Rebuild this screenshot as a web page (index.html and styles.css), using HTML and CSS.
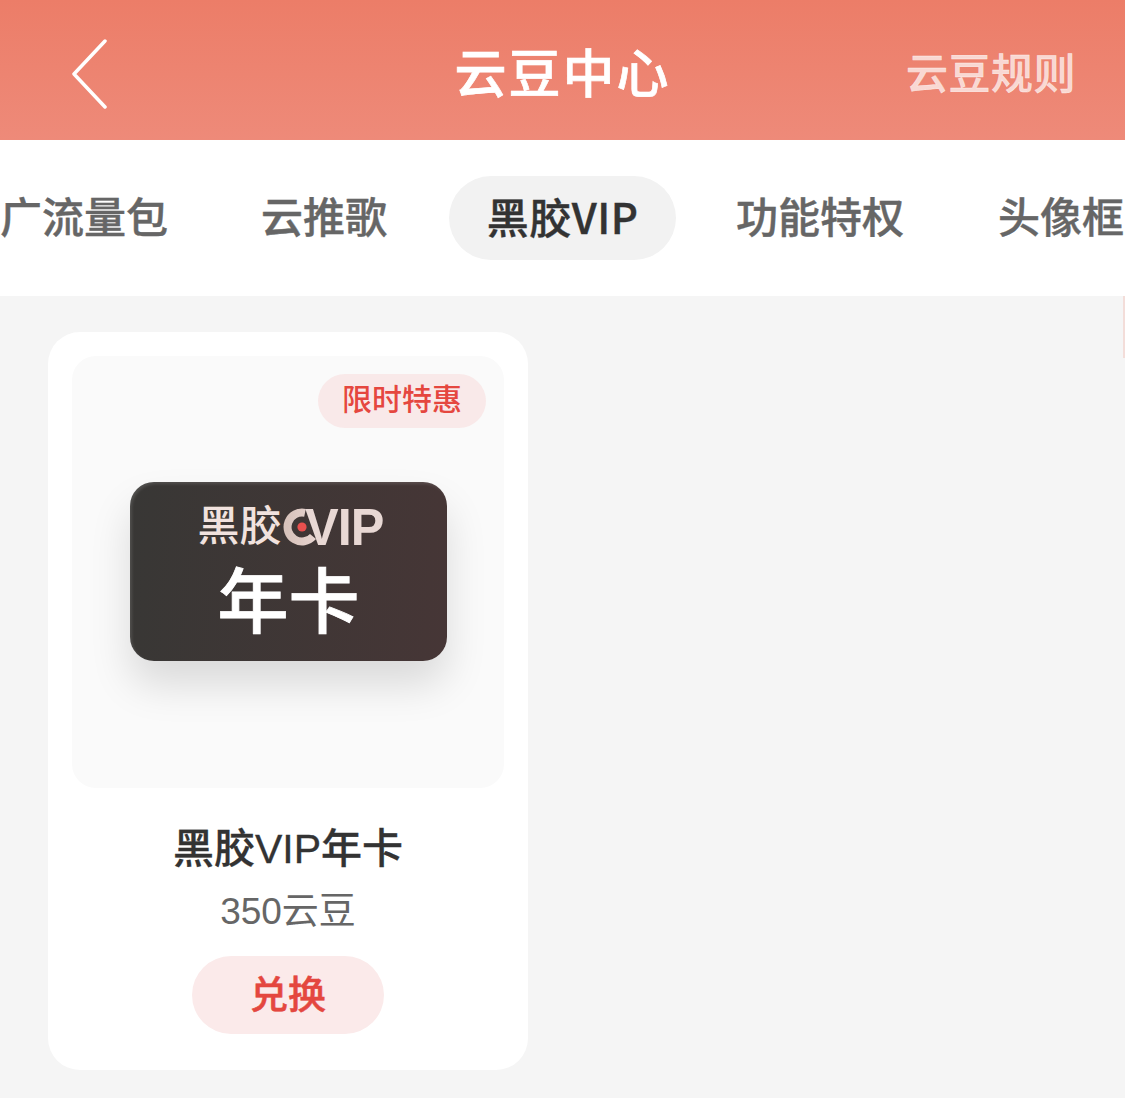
FILE: index.html
```html
<!DOCTYPE html>
<html lang="zh-CN">
<head>
    <meta charset="UTF-8">
    <meta name="viewport" content="width=device-width, initial-scale=1.0">
    <title>云豆中心</title>
    <link rel="stylesheet" href="styles.css">
</head>
<body>
    <header class="topbar">
        <svg class="back" width="36" height="70" viewBox="0 0 36 70">
            <path d="M33 2 L2 35 L33 68" fill="none" stroke="#fff" stroke-width="3.5" stroke-linecap="round" stroke-linejoin="round"/>
        </svg>
        <h1 class="title">云豆中心</h1>
        <a class="rules">云豆规则</a>
    </header>

    <nav class="tabs">
        <span class="tab tab-first">广流量包</span>
        <span class="tab tab-song">云推歌</span>
        <span class="tab active">黑胶VIP</span>
        <span class="tab tab-power">功能特权</span>
        <span class="tab tab-frame">头像框</span>
    </nav>

    <main class="goods">
        <div class="card">
            <div class="thumb">
                <span class="badge">限时特惠</span>
                <div class="vip-card">
                    <div class="vip-logo">
                        <span class="vip-word">黑胶</span>
                        <svg class="vip-mark" width="40" height="38" viewBox="0 0 40 38">
                            <defs>
                                <linearGradient id="ring" x1="0" y1="0" x2="1" y2="0">
                                    <stop offset="0" stop-color="#d8c3bc"/>
                                    <stop offset="1" stop-color="#e6d3ce"/>
                                </linearGradient>
                            </defs>
                            <path d="M22 4.8 A14.5 14.5 0 1 0 30 28.5" fill="none" stroke="url(#ring)" stroke-width="8"/>
                            <circle cx="19" cy="19" r="4.6" fill="#e9504e"/>
                        </svg>
                        <span class="vip-letters">VIP</span>
                    </div>
                    <div class="vip-year">年卡</div>
                </div>
            </div>
            <div class="name">黑胶VIP年卡</div>
            <div class="price">350云豆</div>
            <button class="exchange">兑换</button>
        </div>
    </main>
</body>
</html>
```

FILE: styles.css
```css
* {
    box-sizing: border-box;
}
body {
    margin: 0;
    background: #f5f5f5;
    font-family: "Liberation Sans", "Noto Sans CJK SC", sans-serif;
    overflow: hidden;
}
.topbar {
    height: 140px;
    background: linear-gradient(180deg, #ec7d68, #ee8a79);
    display: grid;
    grid-template-columns: 1fr auto 1fr;
    align-items: center;
    padding: 0 49px;
    color: #fff;
}
.back {
    display: block;
    margin: 8px 0 0 23px;
}
.title {
    margin: 10px 0 0 0;
    font-size: 52px;
    font-weight: 500;
    letter-spacing: 2px;
    line-height: 1;
    -webkit-text-stroke: 0.7px #fff;
}
.rules {
    justify-self: end;
    font-size: 42px;
    font-weight: 500;
    letter-spacing: 0.5px;
    -webkit-text-stroke: 0.4px rgba(255, 255, 255, 0.7);
    color: rgba(255, 255, 255, 0.7);
}
.tabs {
    height: 156px;
    background: #fff;
    display: flex;
    align-items: center;
    overflow: hidden;
    white-space: nowrap;
}
.tab {
    flex: none;
    height: 84px;
    line-height: 86px;
    border-radius: 42px;
    padding: 0 38px;
    font-size: 42px;
    font-weight: 500;
    -webkit-text-stroke: 0.4px #666;
    color: #666;
}
.tab-first {
    margin-left: -38px;
}
.tab-song {
    margin-left: 17px;
}
.active {
    width: 227px;
    margin-left: 24px;
    padding: 0;
    line-height: 80px;
    text-align: center;
    background: #f2f2f2;
    font-family: "Noto Sans CJK SC", sans-serif;
    letter-spacing: 0.5px;
    -webkit-text-stroke: 0.4px #333;
    color: #333;
}
.tab-power {
    margin-left: 22px;
}
.tab-frame {
    margin-left: 18px;
}
.goods {
    position: relative;
    padding: 36px 48px;
}
.goods::after {
    content: "";
    position: absolute;
    top: 0;
    right: 0;
    width: 2px;
    height: 62px;
    background: rgba(236, 125, 104, 0.2);
}
.card {
    width: 480px;
    height: 738px;
    background: #fff;
    border-radius: 32px;
    padding: 24px;
    display: flex;
    flex-direction: column;
    align-items: center;
}
.thumb {
    position: relative;
    width: 432px;
    height: 432px;
    flex: none;
    background: #fafafa;
    border-radius: 24px;
    display: flex;
    justify-content: center;
    padding-top: 126px;
}
.badge {
    position: absolute;
    top: 18px;
    right: 18px;
    width: 168px;
    height: 54px;
    line-height: 52px;
    text-align: center;
    border-radius: 27px;
    background: #f9e9e9;
    color: #e5473f;
    font-size: 30px;
    font-weight: 500;
}
.vip-card {
    width: 317px;
    height: 179px;
    margin-left: 1px;
    border-radius: 24px;
    background: linear-gradient(95deg, #383735, #463636);
    box-shadow: 0 24px 40px rgba(0, 0, 0, 0.13), inset 2px 2px 3px rgba(255, 255, 255, 0.12);
    display: flex;
    flex-direction: column;
    align-items: center;
    color: #fff;
}
.vip-logo {
    width: 182px;
    height: 46px;
    margin-top: 22px;
    display: flex;
    align-items: center;
    font-size: 42px;
    font-weight: 500;
    line-height: 46px;
    color: #f1e2de;
}
.vip-word {
    flex: none;
}
.vip-mark {
    flex: none;
    margin-left: 1px;
}
.vip-letters {
    flex: none;
    margin-left: -18px;
    font-weight: 700;
    font-size: 52px;
    letter-spacing: -1px;
    color: #e8d8d4;
    transform: scaleX(0.97);
    transform-origin: left center;
}
.vip-year {
    margin-top: 13px;
    font-size: 71px;
    font-weight: 500;
    line-height: 80px;
    -webkit-text-stroke: 0.8px #fff;
}
.name {
    margin-top: 37px;
    font-size: 41px;
    line-height: 48px;
    font-weight: 500;
    -webkit-text-stroke: 0.3px #333;
    color: #333;
}
.price {
    margin-top: 17px;
    font-size: 37px;
    line-height: 44px;
    color: #666;
}
.exchange {
    margin-top: 22px;
    width: 192px;
    height: 78px;
    padding: 0 0 7px;
    border: none;
    border-radius: 39px;
    background: #fbeaea;
    color: #e4473f;
    font-family: inherit;
    font-size: 38px;
    font-weight: 500;
    -webkit-text-stroke: 0.5px #e4473f;
}
```
